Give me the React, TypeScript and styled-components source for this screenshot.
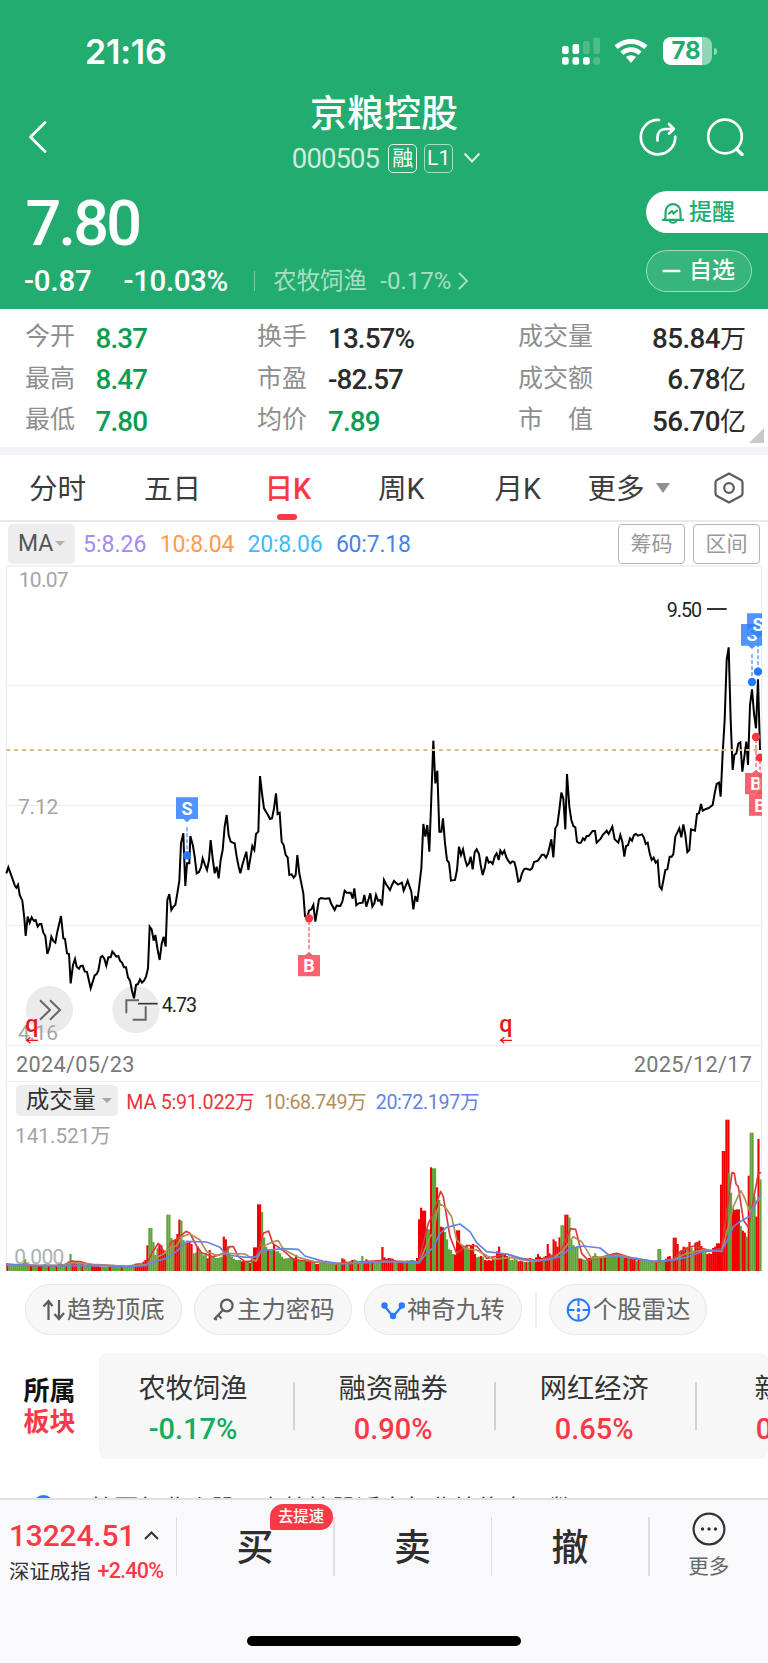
import React from 'react';
import styled, { createGlobalStyle } from 'styled-components';

const UP = '#f93a46';
const DOWN = '#0a9d52';
const HEADER = '#22ac6f';

const Global = createGlobalStyle`
  * { box-sizing: border-box; }
  body {
    margin: 0;
    background: #fff;
    font-family: Roboto, "Noto Sans CJK SC", sans-serif;
    color: #333;
    -webkit-font-smoothing: antialiased;
  }
  svg { display: block; flex: none; }
`;

const Screen = styled.div`
  width: 768px;
  height: 1663px;
  display: flex;
  flex-direction: column;
  overflow: hidden;
  background: #fff;
`;

const Num = styled.span<{ $size: number; $ls?: number; $weight?: number; $color?: string; $ml?: number }>`
  font-size: ${(p) => p.$size}px;
  letter-spacing: ${(p) => p.$ls ?? 0}px;
  font-weight: ${(p) => p.$weight ?? 400};
  color: ${(p) => p.$color ?? 'inherit'};
  margin-left: ${(p) => p.$ml ?? 0}px;
  white-space: nowrap;
`;

/* ---------- header ---------- */

const Header = styled.header`
  height: 309px;
  flex: none;
  display: flex;
  flex-direction: column;
  background: ${HEADER};
  color: #fff;
`;

const StatusBar = styled.div`
  height: 88px;
  padding: 30px 51px 0 85px;
  display: flex;
  justify-content: space-between;
  align-items: flex-start;
`;

const Clock = styled.div`
  font: 600 34px/43px Inter, sans-serif;
  letter-spacing: -0.2px;
`;

const StatusIcons = styled.div`
  display: flex;
  align-items: flex-start;
  gap: 14.5px;
  padding-top: 7px;
`;

const Battery = styled.div`
  position: relative;
  width: 49.5px;
  height: 27.5px;
  margin-right: 5px;
  border-radius: 8px;
  background: linear-gradient(90deg, #fff 39px, rgba(255, 255, 255, 0.5) 39px);
  color: ${HEADER};
  font: 700 24px/28px Inter, sans-serif;
  padding-left: 9px;
  &::after {
    content: '';
    position: absolute;
    right: -4.5px;
    top: 10.5px;
    width: 2.6px;
    height: 7px;
    border-radius: 0 3px 3px 0;
    background: rgba(255, 255, 255, 0.5);
  }
`;

const NavBar = styled.div`
  height: 97px;
  display: grid;
  grid-template-columns: 240px 1fr 240px;
`;

const NavSide = styled.div<{ $end?: boolean }>`
  display: flex;
  align-items: center;
  gap: 30px;
  justify-content: ${(p) => (p.$end ? 'flex-end' : 'flex-start')};
  padding: ${(p) => (p.$end ? '0 24.5px 0 0' : '0 0 0 28px')};
`;

const TitleBlock = styled.div`
  display: flex;
  flex-direction: column;
  align-items: center;
`;

const Title = styled.h1`
  margin: 0;
  padding-top: 1px;
  font-size: 37px;
  line-height: 52px;
  font-weight: 500;
`;

const CodeRow = styled.div`
  display: flex;
  align-items: center;
  height: 34px;
  padding-left: 5px;
  svg { margin-left: 10px; }
`;

const Tag = styled.span<{ $ml: number; $dim?: boolean }>`
  width: 29px;
  height: 29px;
  margin-left: ${(p) => p.$ml}px;
  border: 1.5px solid rgba(255, 255, 255, ${(p) => (p.$dim ? 0.6 : 0.85)});
  border-radius: 5px;
  font-size: 21px;
  line-height: 26px;
  text-align: center;
`;

const QuoteBlock = styled.div`
  flex: 1;
  display: flex;
  justify-content: space-between;
`;

const QuoteMain = styled.div`
  padding-left: 24px;
`;

const Price = styled.div`
  height: 77px;
  padding-left: 1.5px;
  font-size: 63px;
  line-height: 77px;
  font-weight: 500;
  letter-spacing: -2.8px;
`;

const ChangeRow = styled.div`
  display: flex;
  align-items: center;
  height: 38px;
`;

const Divider = styled.i<{ $h: number; $color: string; $ml?: number; $mr?: number }>`
  flex: none;
  width: 1.5px;
  height: ${(p) => p.$h}px;
  background: ${(p) => p.$color};
  margin-left: ${(p) => p.$ml ?? 0}px;
  margin-right: ${(p) => p.$mr ?? 0}px;
`;

const Sector = styled.span`
  display: flex;
  align-items: center;
  height: 38px;
  line-height: 36px;
  font-size: 23.4px;
  color: rgba(255, 255, 255, 0.62);
  svg { margin-left: 6px; }
`;

const Actions = styled.div`
  width: 122px;
  padding-top: 6px;
  display: flex;
  flex-direction: column;
  gap: 16.5px;
`;

const ActionPill = styled.button<{ $solid?: boolean }>`
  display: flex;
  align-items: center;
  width: ${(p) => (p.$solid ? 122 : 106)}px;
  height: 42px;
  padding: 1px 0 0 15px;
  gap: ${(p) => (p.$solid ? 4 : 8)}px;
  border: ${(p) => (p.$solid ? 'none' : '1px solid rgba(255,255,255,.5)')};
  border-radius: ${(p) => (p.$solid ? '21px 0 0 21px' : '21px')};
  background: ${(p) => (p.$solid ? '#fff' : 'rgba(255,255,255,.1)')};
  color: ${(p) => (p.$solid ? HEADER : '#fff')};
  font: 500 23px/38px Roboto, 'Noto Sans CJK SC', sans-serif;
`;

/* ---------- key figures ---------- */

const Figures = styled.section`
  height: 138px;
  flex: none;
  position: relative;
  padding: 9px 22px 0 25px;
  display: grid;
  grid-template-columns: 232px 261px 1fr;
  grid-auto-rows: 41.5px;
`;

const Figure = styled.div<{ $gap: number; $spread?: boolean }>`
  display: flex;
  align-items: center;
  gap: ${(p) => p.$gap}px;
  justify-content: ${(p) => (p.$spread ? 'space-between' : 'flex-start')};
  font-size: 25px;
  line-height: 38px;
  color: #333;
`;

const FigureLabel = styled.span`
  color: #8e8e8e;
  white-space: pre;
  padding-bottom: 3px;
`;

const Unit = styled.span`
  font-size: 26px;
  font-weight: 400;
  letter-spacing: 0;
`;

const ExpandCorner = styled.i`
  position: absolute;
  right: 4px;
  bottom: 4px;
  border-left: 15px solid transparent;
  border-bottom: 15px solid #c9c9c9;
`;

const Band = styled.div`
  height: 8px;
  flex: none;
  background: #f2f3f9;
`;

/* ---------- period tabs ---------- */

const Tabs = styled.nav`
  height: 67px;
  flex: none;
  display: flex;
  align-items: stretch;
  border-bottom: 2px solid #e9e9e9;
  padding-left: 29px;
`;

const Tab = styled.div<{ $w: number; $on?: boolean }>`
  width: ${(p) => p.$w}px;
  font-size: 28.6px;
  line-height: 65px;
  color: ${(p) => (p.$on ? UP : '#3c3c3c')};
  font-weight: ${(p) => (p.$on ? 500 : 400)};
  display: flex;
  align-items: center;
`;

const TabLabel = styled.span<{ $on?: boolean }>`
  position: relative;
  height: 65px;
  line-height: 68px;
  &::after {
    content: '';
    display: ${(p) => (p.$on ? 'block' : 'none')};
    position: absolute;
    left: 50%;
    bottom: 0;
    width: 20px;
    height: 6px;
    margin-left: -10.5px;
    border-radius: 3px;
    background: ${UP};
  }
`;

const Caret = styled.i<{ $w: number; $h: number; $color: string; $ml: number }>`
  flex: none;
  margin-left: ${(p) => p.$ml}px;
  border: ${(p) => p.$w / 2}px solid transparent;
  border-top: ${(p) => p.$h}px solid ${(p) => p.$color};
  border-bottom: 0;
`;

/* ---------- moving averages ---------- */

const AverageRow = styled.div`
  height: 42px;
  flex: none;
  display: flex;
  align-items: center;
  padding: 1px 8px 0 8px;
`;

const Picker = styled.div<{ $w: number; $h: number; $size: number; $pl: number; $color: string }>`
  display: flex;
  align-items: center;
  width: ${(p) => p.$w}px;
  height: ${(p) => p.$h}px;
  padding-left: ${(p) => p.$pl}px;
  border-radius: 5px;
  background: #ededed;
  font-size: ${(p) => p.$size}px;
  line-height: ${(p) => p.$h}px;
  color: ${(p) => p.$color};
`;

const AverageValues = styled.div`
  flex: 1;
  display: flex;
  gap: 13.5px;
  padding: 1px 0 0 8px;
`;

const OutlineButton = styled.button`
  width: 67px;
  height: 40px;
  margin-left: 8px;
  border: 1.5px solid #b4b4b4;
  border-radius: 4px;
  background: #fff;
  color: #999;
  padding: 0;
  font: 400 21px/34px Roboto, 'Noto Sans CJK SC', sans-serif;
`;

const ChartBox = styled.div`
  position: relative;
  flex: none;
`;

const VolumeHead = styled.div`
  position: absolute;
  left: 16px;
  top: 4px;
  display: flex;
  align-items: center;
`;

/* ---------- indicator chips ---------- */

const Chips = styled.div`
  height: 81px;
  flex: none;
  padding: 13px 0 0 24.5px;
  display: flex;
  gap: 12.3px;
`;

const Chip = styled.div`
  width: 157.7px;
  height: 51px;
  padding: 1px 0 0 16px;
  display: flex;
  align-items: center;
  border: 1px solid #e6e6e6;
  border-radius: 26px;
  background: #f7f7f7;
  color: #666;
  font-size: 24.4px;
  line-height: 48px;
  white-space: nowrap;
  svg { margin-right: 1.5px; }
`;

const ChipRule = styled(Divider)`
  margin: 8px 0 0 1px;
`;

/* ---------- sectors ---------- */

const Sectors = styled.section`
  height: 108px;
  flex: none;
  margin-top: 1px;
  display: flex;
`;

const SectorTitle = styled.div`
  width: 99px;
  padding: 23px 0 0 23.5px;
  font-size: 26px;
  line-height: 31px;
  font-weight: 700;
  color: #111;
  em { font-style: normal; display: block; color: ${UP}; }
`;

const SectorStrip = styled.div`
  flex: 1;
  height: 106px;
  display: flex;
  overflow: hidden;
  border-radius: 8px;
  background: #f7f7f8;
`;

const SectorCell = styled.div`
  display: flex;
  align-items: center;
  height: 106px;
  flex: none;
`;

const SectorItem = styled.div<{ $w: number; $pr: number }>`
  flex: none;
  width: ${(p) => p.$w}px;
  padding: 6px ${(p) => p.$pr}px 0 0;
  display: flex;
  flex-direction: column;
  align-items: center;
  font-size: 27.2px;
  line-height: 40px;
`;

const News = styled.div`
  flex: none;
  height: 37px;
  overflow: hidden;
  display: flex;
  padding: 32px 0 0 33px;
  gap: 36px;
  font-size: 24.2px;
  line-height: 32px;
  color: #333;
  white-space: nowrap;
`;

const NewsDot = styled.i`
  flex: none;
  width: 21px;
  height: 21px;
  margin-top: 2px;
  border: 3px solid #2a7bff;
  border-radius: 50%;
`;

/* ---------- bottom bar ---------- */

const Bottom = styled.footer`
  flex: 1;
  display: flex;
  flex-direction: column;
  border-top: 2px solid #e1e1e4;
  background: #f9f9fc;
`;

const BottomRow = styled.div`
  height: 96px;
  display: flex;
  align-items: flex-start;
`;

const IndexCell = styled.div`
  width: 175.5px;
  padding: 16px 0 0 9px;
`;

const IndexLine = styled.div<{ $h: number; $gap: number }>`
  display: flex;
  align-items: center;
  height: ${(p) => p.$h}px;
  gap: ${(p) => p.$gap}px;
  font-size: 20.4px;
  white-space: nowrap;
`;

const TradeCell = styled.div`
  position: relative;
  width: 156px;
  height: 92px;
  padding-top: 3px;
  text-align: center;
  font-size: 37px;
  line-height: 92px;
  font-weight: 500;
  color: #2e2e2e;
  flex: none;
`;

const Cell = styled.div`
  display: flex;
  align-items: center;
  height: 92px;
  flex: none;
`;

const Badge = styled.span`
  position: absolute;
  z-index: 1;
  left: 92.5px;
  top: 4px;
  width: 63px;
  height: 26px;
  border-radius: 13px 13px 13px 2px;
  background: ${UP};
  color: #fff;
  font-size: 15.4px;
  line-height: 26px;
  font-weight: 500;
`;

const MoreCell = styled.div`
  flex: 1;
  display: flex;
  flex-direction: column;
  align-items: center;
  gap: 1px;
  padding: 11.5px 0 0;
  font-size: 20.5px;
  line-height: 36px;
  color: #666;
`;

const HomeIndicator = styled.div`
  width: 274px;
  height: 10px;
  margin: 40px 0 0 247px;
  border-radius: 5px;
  background: #000;
`;

/* ---------- chart data (three units per pixel) ---------- */

const PRICE_A =
  '19,940 25,922 37,955 45,978 49,983 54,974 59,1005 67,1022 73,1075 77,1128 83,1070 89,1088 95,1072 101,1082 107,1080 113,1100 119,1092 124,1092 130,1118 136,1128 142,1182 148,1165 154,1130 160,1143 166,1148 172,1115 183,1068 190,1135 195,1137 201,1180 207,1182 212,1270 219,1215 225,1197 230,1220 237,1226 242,1218 248,1217 254,1234 261,1236 272,1285 284,1246 290,1242 295,1232 302,1192 307,1188 313,1196 319,1217 325,1192 332,1192 337,1175 343,1182 349,1190 355,1188 360,1202 366,1208 372,1222 378,1222 384,1252 390,1262 396,1292 402,1315 408,1275 414,1272 420,1258 426,1268 432,1262 438,1250 444,1225 449,1100 455,1108 461,1142 466,1125 473,1170 479,1200 485,1152 491,1130 497,1160 502,1020 508,1002 514,1050 520,1040 526,1035 532,1000 538,962 543,850 550,820 552,878 556,978 561,910 568,910 571,828 579,858 584,890 590,940 597,936 603,922 608,895 615,915 621,930 627,900 632,840 638,895 644,940 650,920 656,955 662,900 668,870 674,800 680,765 686,825 692,845 698,848 704,850 710,890 716,920 721,940 727,915 733,895 739,875 745,930 751,895 757,858 763,870 768,822 775,815 780,648 786,700 792,745 798,755 804,765 810,777 816,775 822,745 828,700 833,762 839,758 845,845 851,855 857,885 863,892 868,945 875,943 881,953 887,945 892,885 898,940 904,970 910,1000 915,1068 921,1075 927,1052 934,1048 940,1035 946,1085 957,1018 963,1014 975,1016 988,1015 993,1030 1004,1050 1010,1037 1021,1038 1027,1025 1034,992 1040,998 1052,998 1058,1016 1063,985 1069,1036 1076,1030 1088,1028 1093,1005 1099,1040 1105,1020 1111,1000 1117,1040 1123,1030 1128,1005 1134,1022';
const PRICE_B =
  '0,1020 6,1036 12,960 18,972 30,990 36,975 42,963 54,974 66,968 71,992 77,978 83,962 94,995 100,1048 106,1008 112,1025 118,975 124,925 130,792 136,830 142,795 148,875 153,740 160,542 166,670 172,632 178,815 184,815 189,775 195,850 201,900 207,908 213,962 225,960 231,930 237,860 243,885 249,868 255,897 261,917 267,910 272,890 278,928 284,877 290,868 297,882 302,915 308,945 314,925 320,890 326,908 332,905 338,912 344,890 350,880 356,900 361,872 367,882 373,872 379,892 385,903 391,910 397,904 403,906 408,925 415,965 420,962 426,940 432,928 438,926 450,930 456,925 462,906 474,902 486,884 492,884 498,893 504,880 514,838 520,892 526,805 532,795 538,750 544,698 550,715 556,808 561,642 568,740 574,780 580,798 586,802 591,845 597,849 603,848 609,835 614,840 620,828 626,828 638,813 645,813 650,848 662,836 668,825 680,812 686,822 697,800 704,838 715,848 721,825 727,845 733,890 738,858 744,856 750,835 756,842 762,825 768,822 774,827 786,823 792,833 797,852 803,848 809,880 815,900 821,893 827,908 833,902 839,980 845,988 856,930 862,928 869,890 875,890 880,882 886,830 898,805 904,832 910,793 916,825 922,876 928,870 933,808 945,812 951,762 957,760 963,732 968,752 975,748 986,744 998,735 1004,700 1010,672 1017,668 1022,710 1028,580 1034,480 1040,300 1046,262 1052,480 1058,630 1063,585 1069,580 1075,550 1081,547 1087,635 1093,590 1099,545 1104,615 1110,435 1116,388 1122,460 1128,505 1134,358 1140,570';

/* volume bars: [x, top, width, direction] with r = rise, g = fall */
type Bar = [number, number, number, 'r' | 'g'];
const VOLUME: Bar[] = [];
const run = (from: number, to: number, tops: string) => {
  const list = tops.split(' ');
  const step = (to - from) / list.length;
  list.forEach((t, i) => {
    VOLUME.push([from + i * step, Number(t.slice(0, -1)), step + 0.5, t.slice(-1) as 'r' | 'g']);
  });
};
run(19, 445, '670r 673g 674g 676g 675g 674g 675g 672g 668g 657g 668g 674g 675r 675g 676g 676g 677r 675r 674g 672g 674g 674r 675g 676g 677g 676r 670g 668g 672g 673g 674r 664g 642g 661r 664r 665r 668g 671g 672r 674g 675g 676g 677g 678r 679r 679r 679r 680r 680g 680g 681g 681g 680r 680g 679g 679g 679g 679g 680r 679g 678g 677g 675g 674g 674g 671r 670r 670r 670r 665r 660r 616r');
run(445, 499, '564g 564g 606g 645g 625g 612r 616r 632r 640r');
run(499, 535, '524g 524g 594g 602g 598r 582r');
run(535, 771, '539r 542g 600g 610g 608r 604r 612r 640g 638g 620r 632g 638g 646g 640g 655r 630r 650g 650g 654g 654g 652g 650g 590r 598r 618g 640g 650g 656g 660g 660g 660g 664r 662r 664g 663g 668r 652g 622r 622r');
run(771, 789, '493r 493r 516g');
run(789, 1144, '592g 620g 628r 632g 630g 612r 634g 634g 640g 650g 656g 655g 654g 652g 652g 655r 645r 657g 662g 660g 660g 664r 665r 666r 665g 666g 672r 672r 668g 666g 663g 662g 665g 668g 668g 668g 670r 668g 668g 655r 658r 664g 665g 664r 660r 658g 661g 668r 668g 648g 668r 658r 662r 664g 664r 664g 668g 664g 664g');
run(1144, 1254, '621r 652r 657r 654r 655r 656r 660g 664g 668r 664r 664r 664g 662r 662g 660g 660g 662g 654r');
run(1254, 1290, '538r 503r 512r 512r 568g 568g');
run(1290, 1368, '382r 385g 385g 442r 480g 560r 562r 576g 598g 628g 630g 642g 644r');
run(1368, 1500, '571r 571r 612r 616r 620g 618g 630g 616r 612r 642r 652g 650g 648r 650g 660r 662r 660r 662r 656r 656g 634r 620r');
run(1500, 1640, '640r 640g 644r 648r 650g 660g 660g 656g 660g 664r 662r 664r 666g 666r 666g 654r 666g 666g 652r 642r 650r 654r 650g 648r');
run(1640, 1693, '612r 640r 644g 598r 604r 620r 592r 556g 556g');
run(1693, 1735, '524r 524r 532g 600g 615g 622g 618g');
run(1735, 1972, '655r 656r 658g 660g 658g 654r 652r 648g 640g 648g 650g 652r 650g 652r 648g 642g 644g 640g 640g 640g 642r 646g 648g 650r 652r 654g 656r 658r 656r 662g 660r 660g 662g 662g 664g 664g 664g 666g 666g 667r');
run(1972, 2018, '627g 627g 664g 662g 656r 650r 648r 656g');
run(2018, 2160, '593r 593r 612r 636g 630r 620r 622r 620g 606r 624g 632g 608r 606r 602r 618r 628g 630g 642r 640r 642r 624r 620r 610r 610r');
run(2160, 2176, '434r 333r 333r');
run(2176, 2188, '239r 239r');
run(2184, 2243, '398g 458g 506r 510r 508r 508r 558g 572r 578r 590g');
run(2243, 2284, '407r 278g 278g 470g 530r 297r 418g');

const MA5 =
  'M19 673 L120 678 L190 676 L215 664 L240 665 L270 674 L380 679 L440 672 L455 640 L475 610 L490 632 L500 636 L515 605 L530 598 L558 574 L570 580 L590 618 L605 638 L640 650 L672 640 L690 620 L700 620 L715 650 L735 665 L768 662 L778 620 L790 580 L806 573 L818 610 L840 625 L860 640 L880 660 L930 664 L1000 672 L1080 666 L1140 662 L1255 666 L1270 610 L1285 550 L1300 520 L1322 454 L1330 470 L1350 590 L1370 640 L1400 616 L1430 618 L1460 655 L1520 642 L1560 655 L1620 662 L1680 640 L1695 605 L1712 566 L1727 568 L1745 640 L1765 662 L1850 640 L1900 656 L1970 666 L2020 660 L2040 635 L2080 618 L2130 632 L2165 625 L2180 520 L2196 398 L2203 400 L2208 432 L2215 440 L2230 540 L2245 562 L2262 470 L2275 400 L2283 398';
const MA10 =
  'M19 675 L180 677 L220 668 L280 673 L380 679 L440 674 L465 655 L490 642 L510 622 L530 618 L545 590 L570 582 L600 600 L620 635 L650 646 L680 640 L735 642 L768 664 L790 618 L820 605 L835 602 L850 628 L895 652 L940 664 L1000 672 L1140 665 L1258 668 L1290 590 L1300 580 L1312 510 L1320 492 L1335 500 L1355 530 L1370 600 L1395 626 L1430 630 L1480 658 L1530 652 L1600 665 L1660 655 L1690 630 L1720 590 L1745 605 L1775 656 L1850 645 L1960 665 L2020 660 L2060 640 L2110 630 L2165 634 L2185 560 L2200 500 L2222 452 L2232 470 L2250 515 L2283 470';
const MA20 =
  'M19 673 L130 677 L300 676 L380 681 L440 676 L465 664 L500 655 L530 634 L560 604 L620 606 L660 622 L680 645 L740 652 L768 650 L785 632 L850 626 L895 628 L915 648 L970 664 L1030 672 L1160 664 L1258 667 L1280 640 L1298 625 L1320 580 L1340 562 L1380 552 L1410 575 L1430 608 L1460 635 L1520 642 L1580 660 L1640 660 L1680 650 L1710 625 L1750 618 L1800 624 L1830 648 L1900 654 L1960 664 L2020 660 L2060 652 L2110 634 L2165 632 L2180 605 L2200 560 L2220 545 L2250 528 L2262 500 L2283 460';

const shift = (pts: string, dx: number) =>
  pts
    .split(' ')
    .map((p) => {
      const [x, y] = p.split(',').map(Number);
      return `${x + dx},${y}`;
    })
    .join(' ');

const Label = (p: { x: number; y: number; w: number; size: number; fill: string; children: string }) => (
  <text x={p.x} y={p.y} textLength={p.w} lengthAdjust="spacing" fontSize={p.size} fill={p.fill}>
    {p.children}
  </text>
);

const Marker = ({ x, y, dotY, kind }: { x: number; y: number; dotY: number; kind: 'S' | 'B' }) => {
  const sell = kind === 'S';
  const fill = sell ? 'rgba(48,126,255,.84)' : 'rgba(248,72,86,.86)';
  const dot = sell ? '#2478ff' : '#fb3542';
  return (
    <g>
      <line
        x1={x}
        x2={x}
        y1={sell ? y + 90 : y - 18}
        y2={dotY}
        stroke={fill}
        strokeWidth={4}
        strokeDasharray="12 6"
      />
      <path
        fill={fill}
        d={
          sell
            ? `M${x - 33} ${y}h66v65h-22l-11 10l-11 -10h-22z`
            : `M${x - 33} ${y}h22l11 -10l11 10h22v64h-66z`
        }
      />
      <text x={x} y={y + 52} textAnchor="middle" fontSize={54} fontWeight={700} fill="#fff">
        {kind}
      </text>
      <circle cx={x} cy={dotY} r={12.5} fill={dot} />
    </g>
  );
};

const DividendMark = ({ x }: { x: number }) => (
  <g>
    <text x={x - 2} y={1416} fontSize={70} fontWeight={500} fill="#ee1515">
      q
    </text>
    <path d={`M${x} 1441h36M${x + 13} 1432l-11 9l11 9`} stroke="#ee1515" strokeWidth={4} fill="none" />
  </g>
);

const PriceChart = () => (
  <svg width="768" height="517" viewBox="0 12 2304 1551">
    <defs>
      <clipPath id="plot">
        <rect x="19" y="18" width="2267" height="1545" />
      </clipPath>
    </defs>
    <path
      d="M19 1563V18H2285V1563M19 376H2285M19 736H2285M19 1097H2285M19 1456H2285"
      stroke="#eeeeef"
      strokeWidth="4"
      fill="none"
    />
    <circle cx="148" cy="1349" r="71" fill="#ebebeb" />
    <circle cx="408" cy="1349" r="71" fill="#ebebeb" />
    <path d="M120 1321l30 29l-30 29M150 1321l30 29l-30 29" stroke="#666" strokeWidth="6" fill="none" />
    <path d="M417 1321H379V1360M437 1339V1379H398" stroke="#666" strokeWidth="6" fill="none" />
    <Label x={56} y={82} w={150} size={63} fill="#a4a4a4">10.07</Label>
    <Label x={54} y={761} w={121} size={63} fill="#a4a4a4">7.12</Label>
    <Label x={54} y={1440} w={120} size={63} fill="#a4a4a4">4.16</Label>
    <polyline
      points={`${PRICE_A} ${shift(PRICE_B, 1140)}`}
      fill="none"
      stroke="#000"
      strokeWidth="6"
      strokeLinejoin="miter"
    />
    <path d="M19 570H2285" stroke="#dcb987" strokeWidth="5.500" strokeDasharray="11.8 11.8" />
    <Label x={485} y={1355} w={106} size={59} fill="#222">4.73</Label>
    <path d="M414 1331H473" stroke="#333" strokeWidth="5" />
    <Label x={2000} y={170} w={106} size={59} fill="#222">9.50</Label>
    <path d="M2121 147H2180" stroke="#333" strokeWidth="6" />
    <g clipPath="url(#plot)">
      <Marker x={561} y={712} dotY={886} kind="S" />
      <Marker x={927} y={1185} dotY={1075} kind="B" />
      <Marker x={2256} y={192} dotY={366} kind="S" />
      <Marker x={2274} y={160} dotY={335} kind="S" />
      <Marker x={2268} y={639} dotY={531} kind="B" />
      <Marker x={2280} y={703} dotY={593} kind="B" />
    </g>
    <DividendMark x={78} />
    <DividendMark x={1500} />
    <Label x={48} y={1536} w={355} size={65} fill="#787878">2024/05/23</Label>
    <Label x={1901} y={1536} w={355} size={65} fill="#787878">2025/12/17</Label>
  </svg>
);

const VolumeChart = () => (
  <ChartBox>
    <svg width="768" height="190" viewBox="0 123 2304 570">
      <path d="M19 693V123M2285 693V123M19 124H2285" stroke="#eeeeef" strokeWidth="4" fill="none" />
      <Label x={45} y={309} w={288} size={62} fill="#a4a4a4">141.521万</Label>
      <g>
        {VOLUME.map(([x, top, w, dir], i) => (
          <rect key={i} x={x} y={top} width={w} height={693 - top} fill={dir === 'r' ? '#f00000' : '#60a33a'} />
        ))}
      </g>
      <Label x={43} y={672} w={150} size={63} fill="#b0b0b0">0.000</Label>
      <g fill="none" strokeWidth="5" strokeLinejoin="round">
        <path d={MA5} stroke="#e0373c" />
        <path d={MA10} stroke="#b28e58" />
        <path d={MA20} stroke="#6585e6" />
      </g>
      <Label x={379} y={206} w={385} size={59} fill="#e5353b">MA 5:91.022万</Label>
      <Label x={792} y={206} w={308} size={59} fill="#b28e58">10:68.749万</Label>
      <Label x={1127} y={206} w={312} size={59} fill="#6283e0">20:72.197万</Label>
    </svg>
    <VolumeHead>
      <Picker $w={102} $h={31} $size={23.3} $pl={10} $color="#333">
        成交量
        <Caret $w={10} $h={5} $color="#a6a6a6" $ml={6} />
      </Picker>
    </VolumeHead>
  </ChartBox>
);

const figures = [
  [['今开', '8.37', '', 1], ['换手', '13.57%', '', 0], ['成交量', '85.84', '万', 0]],
  [['最高', '8.47', '', 1], ['市盈', '-82.57', '', 0], ['成交额', '6.78', '亿', 0]],
  [['最低', '7.80', '', 1], ['均价', '7.89', '', 1], ['市　值', '56.70', '亿', 0]],
] as const;

const sectors = [
  { name: '农牧饲渔', pct: '-0.17%', width: 194, pr: 6 },
  { name: '融资融券', pct: '0.90%', width: 199.5, pr: 2 },
  { name: '网红经济', pct: '0.65%', width: 199.5, pr: 2 },
  { name: '新零售', pct: '0.48%', width: 199.5, pr: 2 },
];

const chips = {
  trend: (
    <svg width="24" height="24" viewBox="0 0 24 24" fill="none" stroke="#5c5c5c" strokeWidth="2.200">
      <path d="M6.500 22V3M1.500 8.500l5-5.500l4 5M17 2v19M12.500 16l4.500 5l5-6" />
    </svg>
  ),
  key: (
    <svg width="24" height="24" viewBox="0 0 24 24" fill="none" stroke="#5c5c5c" strokeWidth="2.200">
      <circle cx="15.800" cy="7.500" r="5.800" />
      <path d="M12 12L3 21.500M7 17l3.500 3.500M3.800 20l2 2" />
    </svg>
  ),
  nine: (
    <svg width="24" height="24" viewBox="0 0 24 24" fill="none" stroke="#2a7bff" strokeWidth="2.400">
      <path d="M3.500 8l8.500 10.500L21 8" />
      <g fill="#2a7bff" stroke="none">
        <circle cx="3.500" cy="7.500" r="3.200" />
        <circle cx="12" cy="18" r="3.200" />
        <circle cx="20.800" cy="7.500" r="3.200" />
      </g>
    </svg>
  ),
  radar: (
    <svg width="25" height="24" viewBox="0 0 25 24" fill="none" stroke="#2a7bff" strokeWidth="2">
      <circle cx="12.500" cy="12" r="10.800" />
      <path d="M12.500 1v7M12.500 16v7M1.500 12h7M16.500 12h7" />
      <circle cx="12.500" cy="12" r="1.900" fill="#2a7bff" stroke="none" />
    </svg>
  ),
};

export default function App() {
  return (
    <Screen>
      <Global />
      <Header>
        <StatusBar>
          <Clock>21:16</Clock>
          <StatusIcons>
            <svg width="38" height="28" viewBox="0 0 38 28" fill="#fff">
              <rect x="0" y="9" width="6.700" height="8" rx="2" />
              <rect x="10.500" y="7" width="6.700" height="10" rx="2" />
              <rect x="21" y="4" width="6.700" height="13" rx="2" opacity=".2" />
              <rect x="31.300" y="0.500" width="6.700" height="16.500" rx="2" opacity=".2" />
              <rect x="0" y="20" width="6.700" height="7.800" rx="2.500" />
              <rect x="10.500" y="20" width="6.700" height="7.800" rx="2.500" />
              <rect x="21" y="20" width="6.700" height="7.800" rx="2.500" />
              <rect x="31.300" y="20" width="6.700" height="7.800" rx="2.500" opacity=".2" />
            </svg>
            <svg width="34" height="28" viewBox="0 0 34 28" fill="#fff">
              <path d="M17 2C10.800 2 5 4.400.6 8.500l3.200 3.600C7.400 8.800 12 7 17 7s9.600 1.800 13.200 5.100l3.200-3.600C29 4.400 23.200 2 17 2z" />
              <path d="M17 10.200c-4 0-7.800 1.500-10.700 4.200l3.300 3.600c2-1.900 4.600-3 7.400-3s5.400 1.100 7.400 3l3.300-3.600c-2.900-2.700-6.700-4.200-10.700-4.200z" />
              <path d="M17 18.200c-1.900 0-3.700.7-5 1.900l5 6 5-6c-1.300-1.200-3.100-1.900-5-1.900z" />
            </svg>
            <Battery>78</Battery>
          </StatusIcons>
        </StatusBar>
        <NavBar>
          <NavSide>
            <svg width="20" height="34" viewBox="0 0 20 34" fill="none" stroke="#fff" strokeWidth="2.800" strokeLinecap="round" strokeLinejoin="round">
              <path d="M17 2.500L2.500 17L17 31.500" />
            </svg>
          </NavSide>
          <TitleBlock>
            <Title>京粮控股</Title>
            <CodeRow>
              <Num $size={27.5} $ls={-0.9} $color="rgba(255,255,255,.78)">000505</Num>
              <Tag $ml={9}>融</Tag>
              <Tag $ml={7} $dim>L1</Tag>
              <svg width="18" height="12" viewBox="0 0 18 12" fill="none" stroke="#d8f0e4" strokeWidth="2">
                <path d="M1.500 1.500L9 9.500l7.500-8" />
              </svg>
            </CodeRow>
          </TitleBlock>
          <NavSide $end>
            <svg width="38" height="38" viewBox="0 0 38 38" fill="none" stroke="#fff" strokeWidth="2.700" strokeLinecap="round" strokeLinejoin="round">
              <path d="M20 2A17.200 17.200 0 1 0 36.200 18.500M18.500 22.500v-3c0-5 3-8.500 8.500-8.500h7.500M30 6l4.800 5L30 15.500" />
            </svg>
            <svg width="37" height="38" viewBox="0 0 37 38" fill="none" stroke="#fff" strokeWidth="2.700" strokeLinecap="round">
              <circle cx="18" cy="18.500" r="16.800" />
              <path d="M29.500 31l5.500 5.500" strokeWidth="3.600" />
            </svg>
          </NavSide>
        </NavBar>
        <QuoteBlock>
          <QuoteMain>
            <Price>7.80</Price>
            <ChangeRow>
              <Num $size={29.5} $ls={-0.2} $weight={500}>-0.87</Num>
              <Num $size={29.5} $ls={-0.4} $weight={500} $ml={32}>-10.03%</Num>
              <Divider $h={20} $color="rgba(255,255,255,.4)" $ml={26} $mr={18} />
              <Sector>
                农牧饲渔
                <Num $size={24} $ml={13.5}>-0.17%</Num>
                <svg width="12" height="20" viewBox="0 0 12 20" fill="none" stroke="currentColor" strokeWidth="1.800">
                  <path d="M2 2l8 8l-8 8" />
                </svg>
              </Sector>
            </ChangeRow>
          </QuoteMain>
          <Actions>
            <ActionPill $solid>
              <svg width="24" height="24" viewBox="0 0 24 24" fill="none" stroke={HEADER} strokeWidth="2.200" strokeLinejoin="round" strokeLinecap="round">
                <path d="M1.800 18.800h20.400M4 18.500c.8-2 .6-5 .6-8a7.400 7.400 0 0 1 14.800 0c0 3-.2 6 .6 8M8.500 19.500c1 3 6 3 7 0M8 12.500l3-2.500l1.500 2.500l3.500-3" />
              </svg>
              提醒
            </ActionPill>
            <ActionPill>
              <svg width="19" height="4" viewBox="0 0 19 4">
                <rect x="0.500" y="0.800" width="18" height="2.400" rx="1" fill="#fff" />
              </svg>
              自选
            </ActionPill>
          </Actions>
        </QuoteBlock>
      </Header>

      <Figures>
        {figures.map((row) =>
          row.map(([label, value, unit, low], col) => (
            <Figure key={label} $gap={col === 0 ? 20.5 : 21} $spread={col === 2}>
              <FigureLabel>{label}</FigureLabel>
              <Num $size={27.8} $ls={col === 2 ? -0.6 : -0.9} $weight={500} $color={low ? DOWN : '#2b2b2b'}>
                {value}
                {unit && <Unit>{unit}</Unit>}
              </Num>
            </Figure>
          )),
        )}
        <ExpandCorner />
      </Figures>
      <Band />

      <Tabs>
        <Tab $w={115}><TabLabel>分时</TabLabel></Tab>
        <Tab $w={120.5}><TabLabel>五日</TabLabel></Tab>
        <Tab $w={113.5} $on><TabLabel $on>日K</TabLabel></Tab>
        <Tab $w={116.5}><TabLabel>周K</TabLabel></Tab>
        <Tab $w={93}><TabLabel>月K</TabLabel></Tab>
        <Tab $w={126}>
          <TabLabel>更多</TabLabel>
          <Caret $w={15} $h={10} $color="#8f8f8f" $ml={11.5} />
        </Tab>
        <Tab $w={32}>
          <svg width="30" height="32" viewBox="0 0 30 32" fill="none" stroke="#5c5c5c" strokeWidth="2.200" strokeLinejoin="round">
            <path d="M15 1.500L27 8q1.500.8 1.500 2.400v11.200q0 1.600-1.500 2.400L15 30.500L3 24q-1.500-.8-1.500-2.400V10.400Q1.500 8.800 3 8z" />
            <circle cx="15" cy="16" r="4.800" />
          </svg>
        </Tab>
      </Tabs>

      <AverageRow>
        <Picker $w={67} $h={40} $size={23} $pl={10} $color="#555">
          MA
          <Caret $w={10} $h={5.5} $color="#b0b0b0" $ml={2} />
        </Picker>
        <AverageValues>
          <Num $size={23} $color="#a58af2">5:8.26</Num>
          <Num $size={23} $ls={-0.3} $color="#ff9b50">10:8.04</Num>
          <Num $size={23} $ls={-0.2} $color="#42b9fa">20:8.06</Num>
          <Num $size={23} $ls={-0.2} $color="#4784e2">60:7.18</Num>
        </AverageValues>
        <OutlineButton>筹码</OutlineButton>
        <OutlineButton>区间</OutlineButton>
      </AverageRow>

      <PriceChart />
      <VolumeChart />

      <Chips>
        <Chip>{chips.trend}趋势顶底</Chip>
        <Chip>{chips.key}主力密码</Chip>
        <Chip>{chips.nine}神奇九转</Chip>
        <ChipRule $h={36} $color="#ededed" />
        <Chip>{chips.radar}个股雷达</Chip>
      </Chips>

      <Sectors>
        <SectorTitle>
          所属<em>板块</em>
        </SectorTitle>
        <SectorStrip>
          {sectors.map((s, i) => (
            <SectorCell key={s.name}>
              {i > 0 && <Divider $h={48} $color="#d2d2d4" />}
              <SectorItem $w={s.width} $pr={s.pr}>
                {s.name}
                <Num $size={29} $weight={500} $color={i ? UP : '#12ad61'}>{s.pct}</Num>
              </SectorItem>
            </SectorCell>
          ))}
        </SectorStrip>
      </Sectors>

      <News>
        <NewsDot />
        粮票行业个股，京粮控股近十年业绩约十一数
      </News>

      <Bottom>
        <BottomRow>
          <IndexCell>
            <IndexLine $h={38} $gap={9}>
              <Num $size={30} $ls={-0.2} $weight={500} $color={UP}>13224.51</Num>
              <svg width="15" height="9" viewBox="0 0 15 9" fill="none" stroke="#333" strokeWidth="2">
                <path d="M1 8l6.500-6.500L14 8" />
              </svg>
            </IndexLine>
            <IndexLine $h={32} $gap={7}>
              深证成指
              <Num $size={21.5} $ls={-0.8} $weight={500} $color={UP}>+2.40%</Num>
            </IndexLine>
          </IndexCell>
          {['买', '卖', '撤'].map((t, i) => (
            <Cell key={t}>
              <Divider $h={59} $color="#dedee2" />
              <TradeCell>
                {t}
                {i === 0 && <Badge>去提速</Badge>}
              </TradeCell>
            </Cell>
          ))}
          <Cell>
            <Divider $h={59} $color="#dedee2" />
          </Cell>
          <MoreCell>
            <svg width="34" height="36" viewBox="0 0 34 36" fill="none" stroke="#333" strokeWidth="2.200">
              <circle cx="17" cy="17" r="15.400" />
              <g fill="#333" stroke="none">
                <circle cx="10.500" cy="17" r="1.700" />
                <circle cx="17" cy="17" r="1.700" />
                <circle cx="23.500" cy="17" r="1.700" />
              </g>
            </svg>
            更多
          </MoreCell>
        </BottomRow>
        <HomeIndicator />
      </Bottom>
    </Screen>
  );
}
